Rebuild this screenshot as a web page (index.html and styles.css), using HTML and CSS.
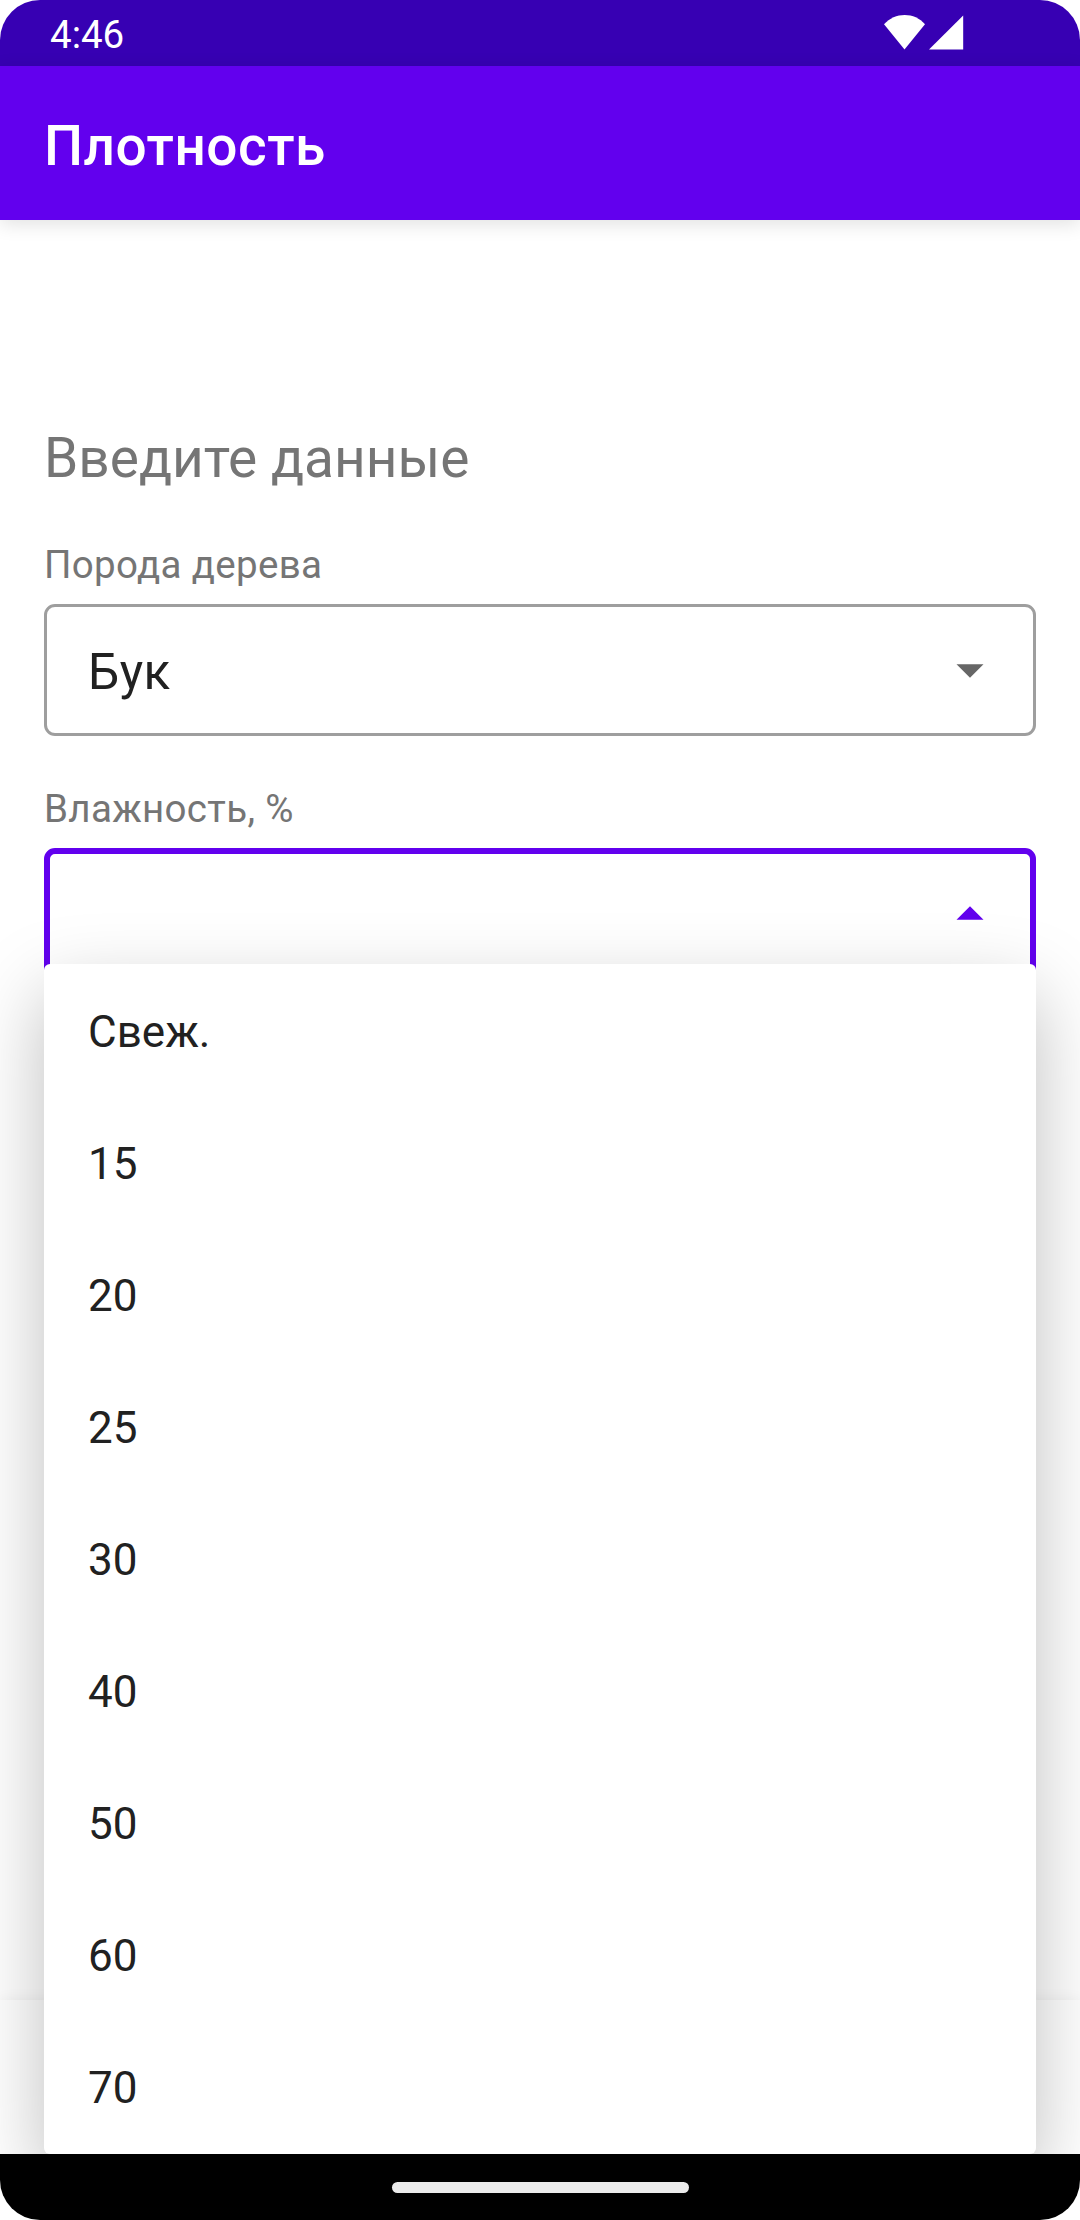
FILE: index.html
```html
<!DOCTYPE html>
<html lang="ru">
<head>
<meta charset="utf-8">
<title>Плотность</title>
<link rel="stylesheet" href="styles.css">
</head>
<body>
<div class="screen">
  <header class="status">
    <span class="time">4:46</span>
    <div class="signals">
      <svg width="42" height="35" viewBox="0 0 42 35"><path d="M0 9.3C5.5 3.2 13 0 20.7 0s15.200 3.200 20.300 9.300L20.500 34.500z" fill="#fff"/></svg>
      <svg width="35" height="35" viewBox="0 0 35 35"><path d="M34.200 .4V34.600H0z" fill="#fff"/></svg>
    </div>
  </header>
  <div class="appbar"><h1 class="title">Плотность</h1></div>
  <main class="content">
    <h2 class="heading">Введите данные</h2>
    <div class="label">Порода дерева</div>
    <div class="field">
      <span>Бук</span>
      <svg class="arrow" width="28" height="14" viewBox="0 0 28 14"><path d="M.5 .3h27L14 13.800z" fill="#666"/></svg>
    </div>
    <div class="label label-next">Влажность, %</div>
    <div class="anchor">
      <div class="field field-active">
        <svg class="arrow" width="28" height="14" viewBox="0 0 28 14"><path d="M.5 13.700h27L14 .2z" fill="#6200ee"/></svg>
      </div>
      <ul class="menu">
        <li>Свеж.</li>
        <li>15</li>
        <li>20</li>
        <li>25</li>
        <li>30</li>
        <li>40</li>
        <li>50</li>
        <li>60</li>
        <li>70</li>
      </ul>
    </div>
  </main>
  <div class="bottombar"></div>
  <footer class="nav"><div class="handle"></div></footer>
</div>
</body>
</html>
```
FILE: styles.css
```css
* { box-sizing: border-box; }
body { margin: 0; background: #fff; font-family: Roboto, sans-serif; }
.screen {
  width: 1080px;
  height: 2220px;
  display: flex;
  flex-direction: column;
  border-radius: 40px;
  overflow: hidden;
  background: #fff;
}
.status {
  height: 66px;
  flex: none;
  display: flex;
  justify-content: space-between;
  padding: 12px 116px 0 50px;
  background: #3700b3;
  color: #fff;
}
.time { font-size: 38.500px; line-height: 45px; }
.signals { display: flex; gap: 3px; padding-top: 3px; }
.appbar {
  height: 154px;
  flex: none;
  padding: 48px 44px 0;
  background: #6200ee;
  color: #fff;
  box-shadow: 0 4px 18px rgba(0, 0, 0, .12);
}
.title { margin: 0; font-size: 55px; line-height: 64px; font-weight: 500; letter-spacing: .5px; }
.content { flex: 1; padding: 206px 44px 0; }
.heading { margin: 0 0 52px; font-size: 55px; line-height: 64px; font-weight: 400; color: #757575; }
.label { margin-bottom: 17px; font-size: 38.500px; line-height: 45px; letter-spacing: .33px; color: #757575; }
.label-next { margin-top: 50px; }
.field {
  height: 132px;
  display: flex;
  align-items: center;
  padding: 2px 49px 0 41px;
  border: 3px solid #9e9e9e;
  border-radius: 11px;
  font-size: 49.500px;
  letter-spacing: .45px;
  color: #212121;
}
.field span { padding-top: 2px; }
.arrow { margin-left: auto; }
.field-active { border: 6px solid #6200ee; padding: 0 46px 2px 38px; }
.anchor { position: relative; }
.menu {
  position: absolute;
  z-index: 1;
  top: 116px;
  left: 0;
  right: 0;
  height: 1190px;
  margin: 0;
  padding: 2px 0 0;
  list-style: none;
  background: #fff;
  border-radius: 6px;
  box-shadow: 0 30px 78px rgba(0, 0, 0, .26);
}
.menu li { height: 132px; padding-left: 44px; font-size: 44px; line-height: 132px; color: #212121; }
.bottombar { height: 154px; flex: none; background: #fff; box-shadow: 0 0 14px rgba(0, 0, 0, .06); }
.nav {
  position: relative;
  z-index: 2;
  height: 66px;
  flex: none;
  display: flex;
  align-items: center;
  justify-content: center;
  background: #000;
}
.handle { width: 297px; height: 11px; border-radius: 6px; background: #ebebeb; }
```
